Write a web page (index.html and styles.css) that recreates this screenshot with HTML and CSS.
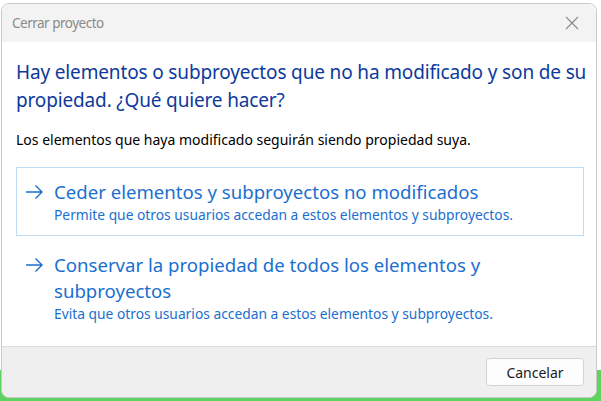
FILE: index.html
```
<!DOCTYPE html>
<html lang="es">
<head>
    <meta charset="UTF-8">
    <meta name="viewport" content="width=device-width, initial-scale=1.0">
    <title>Cerrar proyecto</title>
    <link rel="stylesheet" href="styles.css">
</head>
<body>
    <div class="dialog">
        <div class="titlebar">
            <span class="title">Cerrar proyecto</span>
            <svg class="close" width="14" height="14" viewBox="0 0 14 14">
                <path d="M1 1 L13 13 M13 1 L1 13" stroke="#8a8a8a" stroke-width="1.1" fill="none"/>
            </svg>
        </div>
        <div class="content">
            <h1 class="main">Hay elementos o subproyectos que no ha modificado y son de su propiedad. ¿Qué quiere hacer?</h1>
            <p class="info">Los elementos que haya modificado seguirán siendo propiedad suya.</p>
            <div class="option active">
                <svg class="arrow" width="19" height="26" viewBox="0 0 19 26">
                    <path d="M1 13 H17 M10.5 6.5 L17 13 L10.5 19.5" stroke="#1a6fd0" stroke-width="1.4" fill="none"/>
                </svg>
                <div class="opt-text">
                    <div class="opt-title">Ceder elementos y subproyectos no modificados</div>
                    <div class="opt-sub">Permite que otros usuarios accedan a estos elementos y subproyectos.</div>
                </div>
            </div>
            <div class="option">
                <svg class="arrow" width="19" height="26" viewBox="0 0 19 26">
                    <path d="M1 13 H17 M10.5 6.5 L17 13 L10.5 19.5" stroke="#1a6fd0" stroke-width="1.4" fill="none"/>
                </svg>
                <div class="opt-text">
                    <div class="opt-title">Conservar la propiedad de todos los elementos y subproyectos</div>
                    <div class="opt-sub">Evita que otros usuarios accedan a estos elementos y subproyectos.</div>
                </div>
            </div>
        </div>
        <div class="footer">
            <button class="btn">Cancelar</button>
        </div>
    </div>
</body>
</html>
```
FILE: styles.css
```
*{
    margin: 0;
    padding: 0;
    box-sizing: border-box;
}
body{
    width: 601px;
    height: 401px;
    overflow: hidden;
    background: linear-gradient(#fff 0, #fff 370px, #5fd35f 370px);
    font-family: "Segoe UI", "Noto Sans", sans-serif;
    padding: 3px 4px 3px 1px;
}
.dialog{
    height: 395px;
    border: 1px solid #c9c9c9;
    border-radius: 8px;
    overflow: hidden;
    background: #fff;
    display: flex;
    flex-direction: column;
}
.titlebar{
    height: 38px;
    background: #f3f3f3;
    display: flex;
    align-items: center;
    justify-content: space-between;
    padding: 0 17px 0 10px;
}
.title{
    font-size: 13.5px;
    letter-spacing: -0.5px;
    color: #8a8a8a;
}
.content{
    flex: 1;
    padding: 16px 12px 0 14px;
}
.main{
    font-size: 19px;
    font-weight: normal;
    color: #0d3a9b;
    line-height: 28px;
    letter-spacing: -0.15px;
    margin-right: -6px;
}
.info{
    font-size: 14px;
    line-height: 19px;
    color: #000;
    margin-top: 16px;
}
.option{
    display: flex;
    border: 1px solid transparent;
    padding: 11px 10px 10px 8px;
    margin-top: 4px;
    color: #1a6fd0;
}
.option.active{
    border-color: #bfdcf3;
    margin-top: 18px;
}
.arrow{
    flex: none;
    margin-right: 10px;
}
.opt-title{
    font-size: 18.6px;
    line-height: 26px;
}
.opt-sub{
    font-size: 13.8px;
    line-height: 20px;
}
.footer{
    height: 51px;
    background: #efefef;
    border-top: 1px solid #dcdcdc;
    display: flex;
    justify-content: flex-end;
    align-items: center;
    padding-right: 12px;
}
.btn{
    width: 98px;
    height: 28px;
    background: #fdfdfd;
    border: 1px solid #d3d3d3;
    border-radius: 4px;
    font-family: "Segoe UI", "Noto Sans", sans-serif;
    font-size: 14px;
    color: #1a1a1a;
}
```
